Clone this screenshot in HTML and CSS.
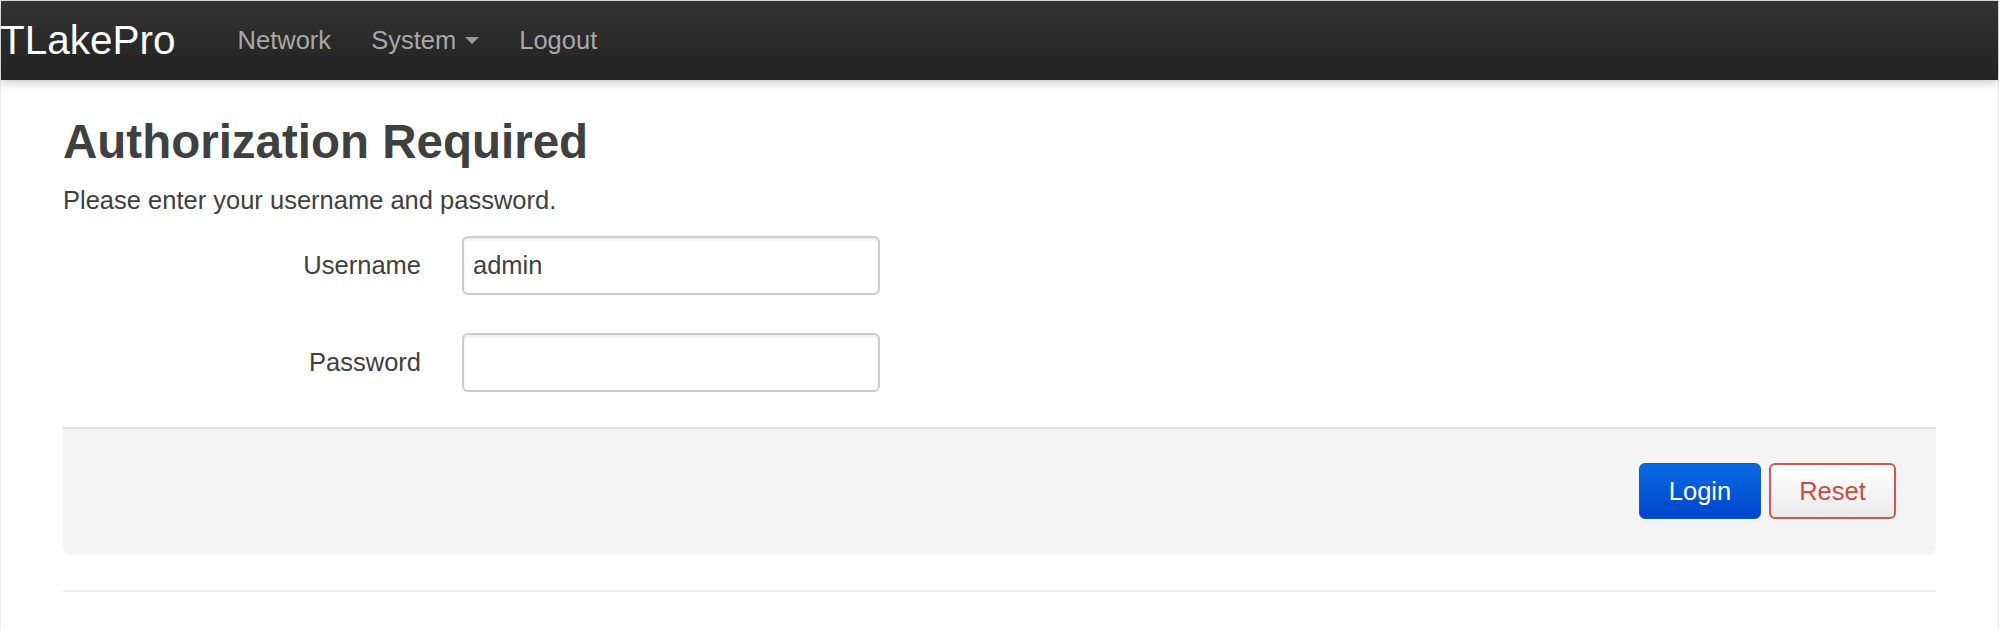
FILE: index.html
```html
<!DOCTYPE html>
<html lang="en">
<head>
<meta charset="utf-8">
<title>TLakePro - Authorization Required</title>
<link rel="stylesheet" href="styles.css">
</head>
<body>
<div class="frame">
  <header class="navbar">
    <a class="brand" href="#">TLakePro</a>
    <ul class="nav">
      <li><a href="#">Network</a></li>
      <li><a href="#">System <span class="caret"></span></a></li>
      <li><a href="#">Logout</a></li>
    </ul>
  </header>
  <main class="container">
    <h2 class="title">Authorization Required</h2>
    <p class="intro">Please enter your username and password.</p>
    <form class="login-form">
      <div class="fields">
        <label class="field-label" for="user">Username</label>
        <input class="field-input" id="user" type="text" value="admin">
        <label class="field-label" for="pass">Password</label>
        <input class="field-input" id="pass" type="password" value="">
      </div>
      <div class="page-actions">
        <button type="button" class="btn btn-primary">Login</button>
        <button type="reset" class="btn btn-reset">Reset</button>
      </div>
    </form>
    <hr class="rule">
  </main>
</div>
</body>
</html>
```
FILE: styles.css
```css
* { box-sizing: border-box; }

html, body {
  margin: 0;
  padding: 0;
  background: #fff;
}

body {
  font-family: "Liberation Sans", Arial, sans-serif;
  color: #404040;
  font-size: 25.5px;
}

.frame {
  min-height: 630px;
  border-right: 1px solid #e4e4e4;
  border-left: 1px solid #f0f0f0;
  border-top: 1px solid #e8e8e8;
}

.navbar {
  height: 79px;
  display: flex;
  align-items: center;
  background: linear-gradient(#333333, #222222);
  box-shadow: 0 2px 10px rgba(0, 0, 0, 0.25);
  position: relative;
}

.brand {
  color: #ffffff;
  font-size: 40.5px;
  text-decoration: none;
  padding: 0 42px 0 0;
  margin-left: -1px;
  line-height: 79px;
}

.nav {
  list-style: none;
  margin: 0;
  padding: 0;
  display: flex;
}

.nav a {
  display: block;
  color: #a8a8a8;
  text-decoration: none;
  font-size: 25.5px;
  padding: 0 20px;
  line-height: 79px;
}

.caret {
  display: inline-block;
  width: 0;
  height: 0;
  margin-left: 2px;
  vertical-align: middle;
  border-top: 7px solid #999999;
  border-left: 7px solid transparent;
  border-right: 7px solid transparent;
  position: relative;
  top: -2px;
}

.container {
  padding: 0 62px;
}

.title {
  font-size: 47.5px;
  font-weight: bold;
  line-height: 56px;
  margin: 34px 0 0;
  color: #404040;
}

.intro {
  margin: 12px 0 0;
  line-height: 36px;
}

.fields {
  display: grid;
  grid-template-columns: 358px 418px;
  column-gap: 41px;
  row-gap: 38px;
  align-items: center;
  margin-top: 18px;
}

.field-label {
  text-align: right;
  color: #404040;
}

.field-input {
  height: 59px;
  width: 418px;
  border: 2px solid #cccccc;
  border-radius: 6px;
  box-shadow: inset 0 2px 3px rgba(0, 0, 0, 0.08);
  font-family: "Liberation Sans", Arial, sans-serif;
  font-size: 25.5px;
  color: #404040;
  padding: 0 9px;
  background: #fff;
}

.page-actions {
  margin-top: 35px;
  background: #f4f4f4;
  border-top: 2px solid #dddddd;
  border-radius: 0 0 8px 8px;
  padding: 34px 40px 36px 0;
  display: flex;
  justify-content: flex-end;
  gap: 8px;
}

.btn {
  height: 56px;
  border-radius: 6px;
  font-family: "Liberation Sans", Arial, sans-serif;
  font-size: 25.5px;
  cursor: pointer;
}

.btn-primary {
  width: 122px;
  color: #ffffff;
  background: linear-gradient(#0a6ae4, #0045cc);
  border: 1px solid #0a5cd4;
}

.btn-reset {
  width: 127px;
  color: #d24a45;
  background: linear-gradient(#ffffff, #eaeaea);
  border: 2px solid #d9534f;
}

.rule {
  margin: 35px 0 0;
  border: 0;
  border-top: 2px solid #eeeeee;
}
```
